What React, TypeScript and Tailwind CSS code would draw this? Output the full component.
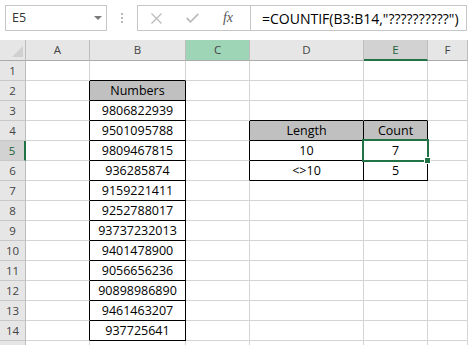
import React from "react";
import clsx from "clsx";

const numbers = [
  "9806822939",
  "9501095788",
  "9809467815",
  "936285874",
  "9159221411",
  "9252788017",
  "93737232013",
  "9401478900",
  "9056656236",
  "90898986890",
  "9461463207",
  "937725641",
];

const cols = ["A", "B", "C", "D", "E", "F"];
const rows = Array.from({ length: 15 }, (_, i) => i + 1);

const cellText = (r: number, c: string): string => {
  if (c === "B" && r === 2) return "Numbers";
  if (c === "B" && r >= 3 && r <= 14) return numbers[r - 3];
  if (r === 4 && c === "D") return "Length";
  if (r === 4 && c === "E") return "Count";
  if (r === 5 && c === "D") return "10";
  if (r === 5 && c === "E") return "7";
  if (r === 6 && c === "D") return "<>10";
  if (r === 6 && c === "E") return "5";
  return "";
};

const Cell = ({ r, c }: { r: number; c: string }) => {
  const rightBlack =
    ((c === "A" || c === "B") && r >= 2 && r <= 14) ||
    ((c === "C" || c === "D" || c === "E") && r >= 4 && r <= 6);
  const bottomBlack =
    (c === "B" && r >= 1 && r <= 14) || ((c === "D" || c === "E") && r >= 3 && r <= 6);
  const fill = (c === "B" && r === 2) || ((c === "D" || c === "E") && r === 4);
  const selected = r === 5 && c === "E";
  return (
    <div
      className={clsx(
        "h-[20px] border-r border-b leading-[19px] text-center text-[12.5px] text-black whitespace-nowrap",
        rightBlack ? "border-r-black" : "border-r-[#d4d4d4]",
        bottomBlack ? "border-b-black" : "border-b-[#d4d4d4]",
        fill && "bg-[#c0c0c0]",
        selected && "relative z-10"
      )}
    >
      {cellText(r, c)}
      {selected && (
        <>
          <div className="absolute left-[-2px] top-[-2px] w-[67px] h-[23px] border-2 border-[#217346]" />
          <div className="absolute left-[60px] top-[16px] w-[7px] h-[7px] border border-white bg-[#217346]" />
        </>
      )}
    </div>
  );
};

const FormulaBar = () => (
  <div className="h-[40px] flex items-start pt-[5px] pl-[5px]">
    <div className="w-[102px] h-[26px] border border-[#c6c6c6] flex items-center justify-between pl-[6px] pr-[4px]">
      <span className="text-[12.5px] text-[#333]">E5</span>
      <svg width="8" height="4" viewBox="0 0 8 4">
        <path d="M0 0 L8 0 L4 4 Z" fill="#7a7a7a" />
      </svg>
    </div>
    <div className="w-[30px] h-[26px] flex flex-col items-center justify-center gap-[2px]">
      <div className="w-[2px] h-[2px] bg-[#b8b8b8]" />
      <div className="w-[2px] h-[2px] bg-[#b8b8b8]" />
      <div className="w-[2px] h-[2px] bg-[#b8b8b8]" />
    </div>
    <div className="w-[330px] h-[26px] border border-[#c6c6c6] flex">
      <div className="w-[113px] border-r border-[#c6c6c6] flex items-center">
        <div className="w-[36px] flex justify-center">
          <svg width="11" height="11" viewBox="0 0 11 11">
            <path d="M0.5 0.5 L10.5 10.5 M10.5 0.5 L0.5 10.5" stroke="#bdbdbd" strokeWidth="1.3" />
          </svg>
        </div>
        <div className="w-[36px] flex justify-center">
          <svg width="13" height="10" viewBox="0 0 13 10">
            <path d="M0.8 5 L4.5 8.8 L12.3 0.8" stroke="#bdbdbd" strokeWidth="1.8" fill="none" />
          </svg>
        </div>
        <div className="w-[36px] flex justify-center">
          <span className="font-['Liberation_Serif'] italic text-[14px] text-[#555] leading-none">
            fx
          </span>
        </div>
      </div>
      <div className="flex items-center pl-[11px] text-[14px] text-black whitespace-nowrap">
        =COUNTIF(B3:B14,"??????????")
      </div>
    </div>
  </div>
);

export default function App() {
  return (
    <div className="w-[468px] h-[345px] overflow-hidden bg-white font-['Open_Sans'] select-none">
      <FormulaBar />
      <div className="grid grid-cols-[26px_64px_96px_64px_114px_64px_40px]">
        <div className="h-[21px] bg-[#e6e6e6] border-r border-b border-r-[#bdbdbd] border-b-[#ababab] flex items-end justify-end pr-[2px] pb-[3px]">
          <svg width="11" height="11" viewBox="0 0 11 11">
            <path d="M11 0 L11 11 L0 11 Z" fill="#d0d0d0" />
          </svg>
        </div>
        {cols.map((c) => (
          <div
            key={c}
            className={clsx(
              "h-[21px] border-r border-r-[#bdbdbd] text-center text-[11.5px] leading-[20px]",
              c === "E"
                ? "bg-[#d2d2d2] border-b-2 border-b-[#217346] text-[#1d5f3a] leading-[19px]"
                : "border-b border-b-[#ababab] text-[#444]",
              c === "C" ? "bg-[#9fd5b7]" : c !== "E" && "bg-[#e6e6e6]"
            )}
          >
            {c}
          </div>
        ))}
        {rows.map((r) => (
          <React.Fragment key={r}>
            <div
              className={clsx(
                "h-[20px] border-b border-b-[#c8c8c8] text-center text-[11.5px] leading-[19px]",
                r === 5
                  ? "bg-[#d2d2d2] border-r-2 border-r-[#217346] text-[#1d5f3a]"
                  : "bg-[#e6e6e6] border-r border-r-[#bdbdbd] text-[#444]"
              )}
            >
              {/* row 15 only peeks in at the bottom edge, its label is off screen */}
              {r < 15 ? r : null}
            </div>
            {cols.map((c) => (
              <Cell key={c} r={r} c={c} />
            ))}
          </React.Fragment>
        ))}
      </div>
    </div>
  );
}
